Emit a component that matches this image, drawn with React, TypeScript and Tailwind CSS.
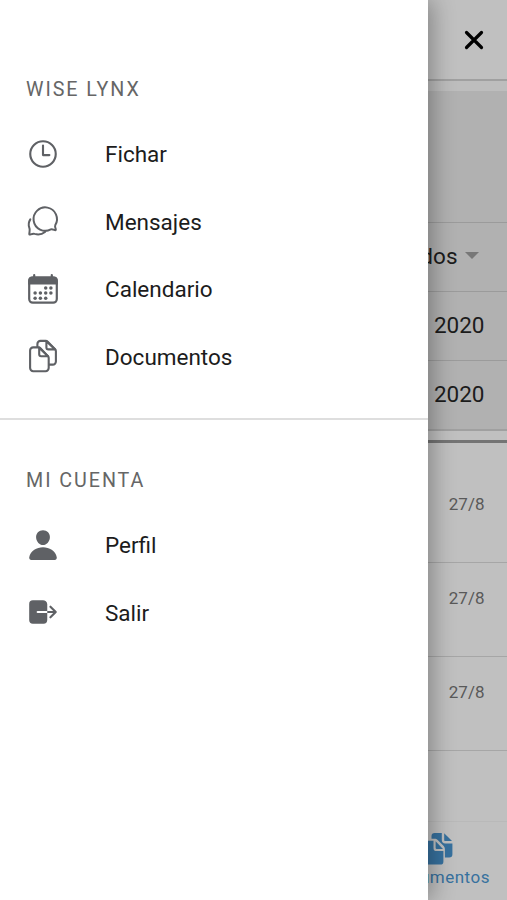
import type { ReactNode } from 'react';
import { IoLogOut, IoPerson, IoTimeOutline } from 'react-icons/io5';

interface IconProps {
  className?: string;
}

interface MenuItem {
  icon: (props: IconProps) => ReactNode;
  label: string;
}

function ChatIcon({ className }: IconProps) {
  return (
    <svg viewBox="0 0 34 34" className={className} fill="none" stroke="currentColor" strokeWidth="2" strokeLinecap="round" strokeLinejoin="round">
      <path d="M29.6 24.6c-.5-1.2-.8-2.400-.3-3.500a11.700 11.700 0 1 0-4.500 4.300c1.300-.4 2.600.2 4.100.7.9.3 1.100-.5.7-1.500z" />
      <path d="M4.300 15.400c-1.700 2.700-2 5.900-.9 8.600.7 1.500.1 3.500-.1 5.600-.1.900.2 1.200.9.900 1.500-.5 2.900-1.100 4.500-.6 3.400.9 7.400.4 10.300-1.900" />
    </svg>
  );
}

function CalendarIcon({ className }: IconProps) {
  return (
    <svg viewBox="0 0 34 34" className={className} fill="currentColor">
      <rect x="3.2" y="5.5" width="27.6" height="25.2" rx="3.6" fill="none" stroke="currentColor" strokeWidth="2.2" />
      <path d="M2.2 12.5V8.6a4 4 0 0 1 4-4h21.6a4 4 0 0 1 4 4v3.9z" />
      <path d="M8.2 3v3M25.8 3v3" stroke="currentColor" strokeWidth="2.2" strokeLinecap="round" />
      <circle cx="19.7" cy="15.9" r="1.75" />
      <circle cx="24.9" cy="15.9" r="1.75" />
      <circle cx="9.1" cy="21.1" r="1.75" />
      <circle cx="14.4" cy="21.1" r="1.75" />
      <circle cx="19.7" cy="21.1" r="1.75" />
      <circle cx="24.9" cy="21.1" r="1.75" />
      <circle cx="9.1" cy="26.3" r="1.75" />
      <circle cx="14.4" cy="26.3" r="1.75" />
      <circle cx="19.7" cy="26.3" r="1.75" />
    </svg>
  );
}

function DocumentsIcon({ className }: IconProps) {
  return (
    <svg viewBox="0 0 34 34" className={className} fill="none" stroke="currentColor" strokeWidth="2.1" strokeLinejoin="round">
      <path d="M11.4 8.4V5a3.1 3.1 0 0 1 3.1-3.1h5.2c.8 0 1.4.3 2 .9l7.4 7.5c.5.5.8 1.2.8 2v10.2a3.1 3.1 0 0 1-3.1 3.1h-4" />
      <path d="M20.4 2.2v6.2a2 2 0 0 0 2 2h6.8z" />
      <path d="M7.2 8.4h5.3c.7 0 1.4.3 1.9.8l7.5 7.9c.5.5.8 1.2.8 2v10a3.1 3.1 0 0 1-3.1 3.1H7.2a3.1 3.1 0 0 1-3.1-3.1V11.5a3.1 3.1 0 0 1 3.1-3.1z" />
      <path d="M13.2 8.7v6.6a2 2 0 0 0 2 2h6.8z" />
    </svg>
  );
}

function DocumentsFilledIcon({ className }: IconProps) {
  return (
    <svg viewBox="0 0 34 34" className={className} fill="currentColor">
      <path d="M9.5 6.7V4.2A3.2 3.2 0 0 1 12.7 1h7.1v7a3.4 3.4 0 0 0 3.4 3.4h7.2v10.9a3.2 3.2 0 0 1-3.2 3.2h-4.3v-8.4c0-1.2-.4-2.3-1.2-3.1l-6-6c-.8-.8-1.900-1.300-3.100-1.300z" />
      <path d="M22.2 1.2l7.800 7.900h-6.600a1.200 1.200 0 0 1-1.200-1.200z" />
      <path d="M6.500 8.700h5v7.200a3.200 3.200 0 0 0 3.200 3.200h6.700v10.300a3.200 3.200 0 0 1-3.200 3.200H6.500a3.200 3.200 0 0 1-3.200-3.200V11.900a3.200 3.200 0 0 1 3.200-3.200z" />
      <path d="M13.600 9.200l7.400 7.700h-6.200a1.200 1.200 0 0 1-1.200-1.200z" />
    </svg>
  );
}

const appItems: MenuItem[] = [
  { icon: IoTimeOutline, label: 'Fichar' },
  { icon: ChatIcon, label: 'Mensajes' },
  { icon: CalendarIcon, label: 'Calendario' },
  { icon: DocumentsIcon, label: 'Documentos' },
];

const accountItems: MenuItem[] = [
  { icon: IoPerson, label: 'Perfil' },
  { icon: IoLogOut, label: 'Salir' },
];

const dates = ['27/8', '27/8', '27/8'];

function MenuSection({ title, items }: { title: string; items: MenuItem[] }) {
  return (
    <section>
      <h2 className="flex h-16 items-center pt-[2px] pl-[26px] text-[19.7px] tracking-[1.95px] text-[#666]">{title}</h2>
      <ul>
        {items.map(({ icon: Icon, label }) => (
          <li key={label} className="flex h-[67.5px] items-center pl-[26px]">
            <Icon className="mr-[45px] mb-[2px] size-[34px] shrink-0 text-[#5f6165]" />
            <span className="pt-px text-[22.5px] text-[#1c1c1c]">{label}</span>
          </li>
        ))}
      </ul>
    </section>
  );
}

function FilterRow({ children }: { children: ReactNode }) {
  return (
    <div className="flex h-[69px] items-center justify-end border-t border-[#9b9b9b] bg-[#b1b1b1] pr-[22.5px] text-[22.5px] text-[#1c1c1c]">
      {children}
    </div>
  );
}

export default function App() {
  return (
    <div className="relative h-[900px] w-[507px] overflow-hidden bg-[#c0c0c0] font-[Roboto,sans-serif]">
      <div className="flex h-full flex-col">
        <header className="flex h-[79px] items-center justify-end pt-px pr-[23.5px]">
          <svg viewBox="0 0 20 20" className="size-5 text-black">
            <path d="M2.5 2.5l15 15M17.5 2.5l-15 15" stroke="currentColor" strokeWidth="3.2" strokeLinecap="round" />
          </svg>
        </header>
        <div className="h-[12px] border-t-2 border-[#a0a0a0] bg-[#bdbdbd]" />
        <div className="h-[130.5px] bg-[#b1b1b1]" />
        <FilterRow>
          <span>Todos</span>
          <svg viewBox="0 0 14 7" className="mr-[6px] mb-[2px] ml-[7px] h-[7px] w-[14px] text-[#777]">
            <path d="M0 0h14L7 7z" fill="currentColor" />
          </svg>
        </FilterRow>
        <FilterRow>2020</FilterRow>
        <FilterRow>2020</FilterRow>
        <div className="h-[14.5px] border-t-2 border-b-[3px] border-t-[#a0a0a0] border-b-[#747474]" />
        <ul>
          {dates.map((date, i) => (
            <li key={i} className="flex h-[94px] items-start justify-end border-b border-[#a6a6a6] pt-[24px] pr-[22.5px] text-[17px] leading-[22px] text-[#595959] first:h-[120px] first:pt-[50px]">
              {date}
            </li>
          ))}
        </ul>
        <nav className="mt-auto flex h-[79px] justify-end border-t border-[#b9b9b9] pr-[17px] text-[#37719e]">
          <div className="flex flex-col items-center pt-[10px]">
            <DocumentsFilledIcon className="size-[34px]" />
            <span className="text-[17px] leading-[22px] tracking-[0.5px]">Documentos</span>
          </div>
        </nav>
      </div>
      <aside className="absolute inset-y-0 left-0 w-[428px] bg-white pt-[57px] shadow-[4px_0_22px_rgba(0,0,0,0.32)]">
        <MenuSection title="WISE LYNX" items={appItems} />
        <hr className="mt-[27px] mb-[28px] border-t-2 border-[#dedede]" />
        <MenuSection title="MI CUENTA" items={accountItems} />
      </aside>
    </div>
  );
}
